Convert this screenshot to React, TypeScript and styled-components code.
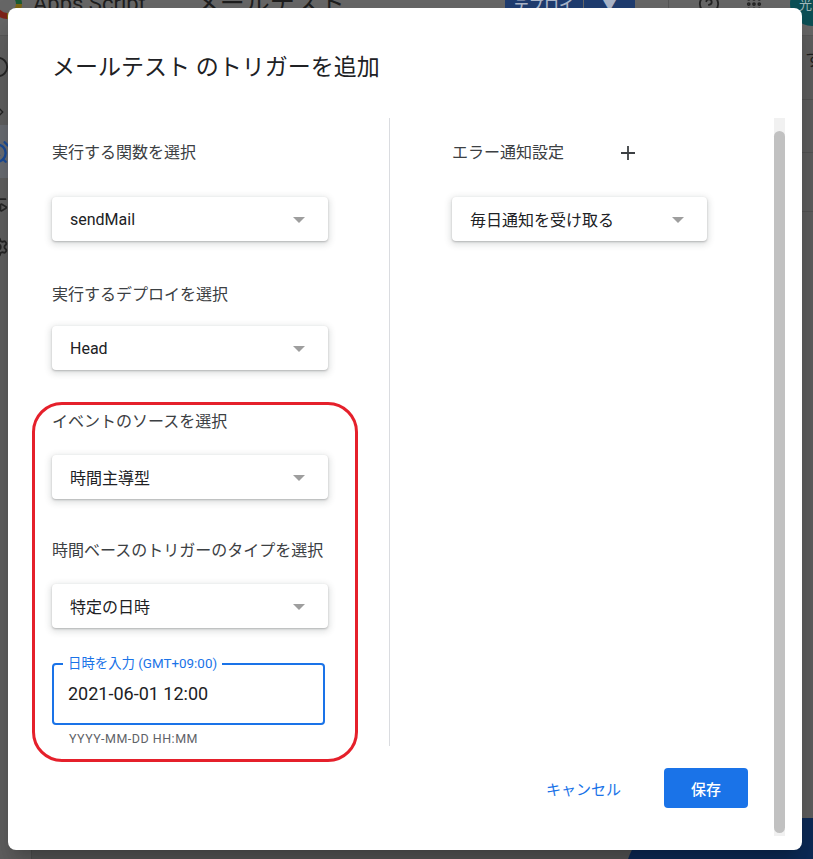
import React from 'react'
import styled, { createGlobalStyle } from 'styled-components'
import {
  AlarmClock,
  ChevronRight,
  CircleHelp,
  Grip,
  Info,
  ListVideo,
  Settings
} from 'lucide-react'

const GlobalStyle = createGlobalStyle`
  html, body {
    margin: 0;
    padding: 0;
    background: #575757;
  }
  body {
    font-family: Roboto, "Noto Sans CJK JP", sans-serif;
    overflow: hidden;
  }
  * {
    box-sizing: border-box;
  }
`

/* ---------- dimmed editor page behind the dialog ---------- */

const Page = styled.div`
  position: relative;
  width: 813px;
  height: 859px;
  overflow: hidden;
  background: #575757;
  display: flex;
  flex-direction: column;
`

const TopBar = styled.header`
  flex: none;
  margin-top: -28px;
  height: 64px;
  display: flex;
  align-items: center;
  background: #666666;
  border-bottom: 1px solid #585858;
  color: #1e1e1e;
`

const Logo = styled.svg`
  flex: none;
  margin-left: -8px;
`

const AppName = styled.span`
  margin-left: 11px;
  font-size: 22px;
  line-height: 28px;
  white-space: nowrap;
`

const ProjectName = styled.span`
  margin-left: 49px;
  font-size: 25px;
  line-height: 30px;
  white-space: nowrap;
`

const Spacer = styled.div`
  flex: 1;
`

const DeployGroup = styled.div`
  display: flex;
  gap: 1px;
  height: 36px;
  border-radius: 4px;
  overflow: hidden;
`

const DeployPart = styled.div<{ $w: number }>`
  width: ${p => p.$w}px;
  display: flex;
  align-items: center;
  justify-content: center;
  background: #1f3c6f;
  color: #aab5c8;
  font-size: 15px;
  font-weight: 500;
`

const BarDivider = styled.div`
  width: 1px;
  height: 40px;
  margin-left: 33px;
  background: #555555;
`

const BarIcon = styled.div<{ $ml: number }>`
  display: flex;
  margin-left: ${p => p.$ml}px;
  color: #222222;
`

const Avatar = styled.div`
  flex: none;
  width: 44px;
  height: 44px;
  margin-left: 27px;
  margin-right: -21px;
  border-radius: 50%;
  background: #0b4f55;
  color: #9fb7b9;
  font-size: 13px;
  display: flex;
  align-items: center;
  justify-content: center;
`

const Workspace = styled.div`
  flex: 1;
  display: flex;
  min-height: 0;
`

const Sidebar = styled.nav`
  width: 32px;
  flex: none;
  display: flex;
  flex-direction: column;
  background: #606060;
  border-right: 1px solid #4f4f4f;
  color: #262626;
`

const SideItem = styled.div<{ $h: number; $active?: boolean; $ml: number }>`
  height: ${p => p.$h}px;
  display: flex;
  align-items: center;
  background: ${p => (p.$active ? '#6a6d73' : 'transparent')};
  color: ${p => (p.$active ? '#1b4c98' : '#262626')};

  svg {
    margin-left: ${p => p.$ml}px;
    flex: none;
  }
`

const Main = styled.div`
  flex: 1;
`

const SidePanel = styled.div`
  width: 40px;
  flex: none;
  background: #5e5e5e;
  display: flex;
  flex-direction: column;
`

const PanelRow = styled.div<{ $h: number }>`
  height: ${p => p.$h}px;
  padding: 12px 0 0 32px;
  border-bottom: 1px solid #535353;
  font-size: 18px;
  line-height: 24px;
  color: #1e1e1e;
  white-space: nowrap;
`

const Toast = styled.div`
  position: absolute;
  left: 625px;
  top: 818px;
  width: 320px;
  height: 200px;
  border-radius: 60px;
  background: #0c2a57;
`

/* ---------- dialog ---------- */

const Dialog = styled.div`
  position: absolute;
  top: 8px;
  left: 8px;
  width: 794px;
  height: 842px;
  border-radius: 8px;
  background: #ffffff;
  box-shadow: 0 11px 15px -7px rgba(0, 0, 0, 0.2),
    0 24px 38px 3px rgba(0, 0, 0, 0.14);
  display: flex;
  flex-direction: column;
`

const Title = styled.h2`
  flex: none;
  margin: 0;
  height: 110px;
  padding: 46px 44px 0;
  font-size: 23px;
  line-height: 28px;
  font-weight: 400;
  color: #202124;
`

const Body = styled.div`
  flex: 1;
  min-height: 0;
  display: flex;
  padding-bottom: 14px;
`

const Content = styled.div`
  flex: 1;
  padding: 0 26px 0 44px;
  display: flex;
  flex-direction: column;
`

const Columns = styled.div`
  display: flex;
  align-items: flex-start;
`

const LeftCol = styled.div`
  width: 337px;
  flex: none;
  padding-top: 23px;
`

const ColDivider = styled.div`
  width: 1px;
  height: 628px;
  flex: none;
  background: #dadce0;
`

const RightCol = styled.div`
  flex: 1;
  padding: 23px 0 0 62px;
`

const Label = styled.div<{ $mt?: number }>`
  margin-top: ${p => p.$mt ?? 0}px;
  font-size: 16px;
  line-height: 24px;
  color: #3c4043;
  white-space: nowrap;
`

const LabelRow = styled.div`
  display: flex;
  align-items: center;
`

const PlusButton = styled.svg`
  margin-left: 56px;
  flex: none;
`

const SelectBox = styled.div<{ $mt: number; $w: number }>`
  margin-top: ${p => p.$mt}px;
  width: ${p => p.$w}px;
  height: 44px;
  padding: 0 23px 0 18px;
  display: flex;
  align-items: center;
  justify-content: space-between;
  background: #ffffff;
  border-radius: 4px;
  box-shadow: 0 1px 2px 0 rgba(60, 64, 67, 0.3),
    0 2px 6px 2px rgba(60, 64, 67, 0.15);
  font-size: 16px;
  color: #202124;
  white-space: nowrap;
`

const Caret = styled.span`
  width: 0;
  height: 0;
  margin-top: 2px;
  border-left: 6px solid transparent;
  border-right: 6px solid transparent;
  border-top: 6px solid #9e9e9e;
`

const Highlight = styled.div`
  margin: 32px 0 0 -20px;
  width: 326px;
  padding: 5px 0 12px 17px;
  border: 3px solid #e5202b;
  border-radius: 30px;
`

const DateField = styled.fieldset`
  margin: 28px 0 0;
  width: 273px;
  padding: 0 14px 17px;
  border: 2px solid #1a73e8;
  border-radius: 4px;
  min-width: 0;
`

const DateLegend = styled.legend`
  margin-left: -5px;
  padding: 0 5px;
  font-size: 13.4px;
  line-height: 16px;
  color: #1a73e8;
  white-space: nowrap;
`

const DateValue = styled.div`
  margin-top: 10px;
  font-size: 18px;
  line-height: 24px;
  color: #202124;
`

const Helper = styled.div`
  margin-top: 6px;
  padding-left: 17px;
  font-size: 12.5px;
  line-height: 16px;
  letter-spacing: 0.5px;
  color: #5f6368;
`

const Actions = styled.div`
  margin-top: 6px;
  display: flex;
  justify-content: flex-end;
  align-items: center;
  gap: 19px;
`

const TextButton = styled.button`
  height: 40px;
  padding: 0 24px;
  border: none;
  background: none;
  font-family: inherit;
  font-size: 15px;
  color: #1a73e8;
`

const PrimaryButton = styled.button`
  width: 84px;
  height: 40px;
  border: none;
  border-radius: 4px;
  background: #1a73e8;
  font-family: inherit;
  font-size: 15px;
  font-weight: 500;
  color: #ffffff;
`

const ScrollTrack = styled.div`
  width: 11px;
  flex: none;
  margin-right: 17px;
  padding: 13px 0 3px;
  background: #f1f1f1;
  display: flex;
  flex-direction: column;
`

const ScrollThumb = styled.div`
  flex: 1;
  border-radius: 6px;
  background: #c1c1c1;
`

type SelectProps = { value: string; mt: number; w?: number }

const Select: React.FC<SelectProps> = ({ value, mt, w = 276 }) => (
  <SelectBox $mt={mt} $w={w}>
    <span>{value}</span>
    <Caret />
  </SelectBox>
)

const App: React.FC = () => (
  <>
    <GlobalStyle />
    <Page>
      <TopBar>
        <Logo width="30" height="30" viewBox="0 0 30 30">
          <path d="M15 3 A12 12 0 0 0 3 15" stroke="#1d3f7a" strokeWidth="6" fill="none" />
          <path d="M27 15 A12 12 0 0 0 15 3" stroke="#1a5a32" strokeWidth="6" fill="none" />
          <path d="M15 27 A12 12 0 0 0 27 15" stroke="#7a6412" strokeWidth="6" fill="none" />
          <path d="M3 15 A12 12 0 0 0 15 27" stroke="#7c2218" strokeWidth="6" fill="none" />
        </Logo>
        <AppName>Apps Script</AppName>
        <ProjectName>メールテスト</ProjectName>
        <Spacer />
        <DeployGroup>
          <DeployPart $w={78}>デプロイ</DeployPart>
          <DeployPart $w={51}>▼</DeployPart>
        </DeployGroup>
        <BarDivider />
        <BarIcon $ml={29}>
          <CircleHelp size={22} strokeWidth={2} />
        </BarIcon>
        <BarIcon $ml={25}>
          <Grip size={18} strokeWidth={3} />
        </BarIcon>
        <Avatar>光司</Avatar>
      </TopBar>
      <Workspace>
        <Sidebar>
          <SideItem $h={62} $ml={-13}>
            <Info size={22} strokeWidth={2} />
          </SideItem>
          <SideItem $h={27} $ml={-6}>
            <ChevronRight size={14} strokeWidth={2.5} />
          </SideItem>
          <SideItem $h={53} $ml={-16} $active>
            <AlarmClock size={26} strokeWidth={2.2} />
          </SideItem>
          <SideItem $h={54} $ml={-12}>
            <ListVideo size={20} strokeWidth={2} />
          </SideItem>
          <SideItem $h={30} $ml={-13}>
            <Settings size={22} strokeWidth={2} />
          </SideItem>
        </Sidebar>
        <Main />
        <SidePanel>
          <PanelRow $h={64}>すべて</PanelRow>
          <PanelRow $h={53} />
          <PanelRow $h={59} />
        </SidePanel>
      </Workspace>
      <Toast />

      <Dialog role="dialog" aria-label="メールテスト のトリガーを追加">
        <Title>メールテスト のトリガーを追加</Title>
        <Body>
          <Content>
            <Columns>
              <LeftCol>
                <Label>実行する関数を選択</Label>
                <Select value="sendMail" mt={32} />
                <Label $mt={42}>実行するデプロイを選択</Label>
                <Select value="Head" mt={19} />
                <Highlight>
                  <Label>イベントのソースを選択</Label>
                  <Select value="時間主導型" mt={21} />
                  <Label $mt={40}>時間ベースのトリガーのタイプを選択</Label>
                  <Select value="特定の日時" mt={21} />
                  <DateField>
                    <DateLegend>日時を入力 (GMT+09:00)</DateLegend>
                    <DateValue>2021-06-01 12:00</DateValue>
                  </DateField>
                  <Helper>YYYY-MM-DD HH:MM</Helper>
                </Highlight>
              </LeftCol>
              <ColDivider />
              <RightCol>
                <LabelRow>
                  <Label>エラー通知設定</Label>
                  <PlusButton width="16" height="16" viewBox="0 0 16 16">
                    <path d="M8 1v14M1 8h14" stroke="#3c4043" strokeWidth="1.8" />
                  </PlusButton>
                </LabelRow>
                <Select value="毎日通知を受け取る" mt={32} w={255} />
              </RightCol>
            </Columns>
            <Actions>
              <TextButton>キャンセル</TextButton>
              <PrimaryButton>保存</PrimaryButton>
            </Actions>
          </Content>
          <ScrollTrack>
            <ScrollThumb />
          </ScrollTrack>
        </Body>
      </Dialog>
    </Page>
  </>
)

export default App
